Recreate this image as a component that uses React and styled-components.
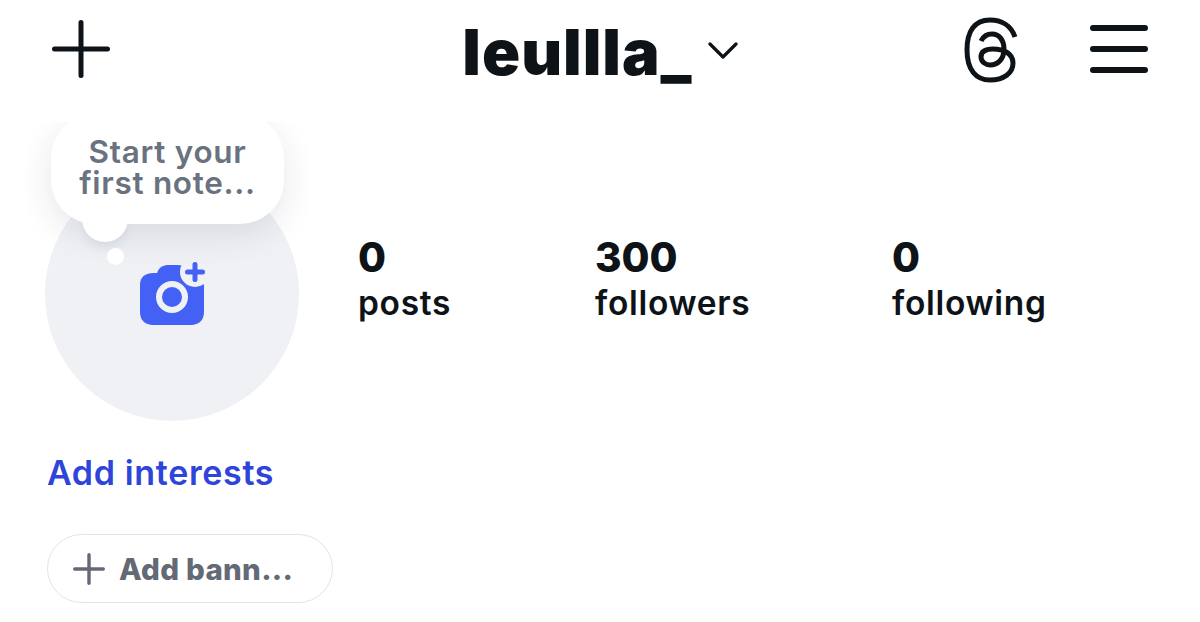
import React from "react";
import styled, { createGlobalStyle } from "styled-components";

const GlobalStyle = createGlobalStyle`
  html, body {
    margin: 0;
    padding: 0;
    background: #fff;
    font-family: "Inter", "Liberation Sans", sans-serif;
    overflow: hidden;
  }
`;

const Page = styled.div`
  width: 1200px;
  height: 622px;
  background: #fff;
  overflow: hidden;
`;

const Header = styled.header`
  height: 98px;
  padding: 0 52px 24px;
  display: grid;
  grid-template-columns: 1fr auto 1fr;
  align-items: center;
`;

const HeaderRight = styled.div`
  display: flex;
  justify-content: flex-end;
  align-items: center;
  gap: 67px;
`;

const Account = styled.div`
  display: flex;
  align-items: center;
  gap: 15px;
`;

const Username = styled.span`
  padding-top: 6px;
  font-size: 63px;
  font-weight: 900;
  letter-spacing: 1px;
  line-height: 1;
  color: #0e1318;
`;

const Icon = styled.svg`
  display: block;
  flex: none;
`;

const ChevronIcon = styled(Icon)`
  margin-top: 3px;
`;

const Profile = styled.section`
  height: 500px;
  padding-left: 45px;
  overflow: hidden;
`;

const Top = styled.div`
  display: flex;
  padding-top: 45px;
`;

const AvatarWrap = styled.div`
  position: relative;
  width: 254px;
  height: 254px;
  flex: none;
`;

const Avatar = styled.div`
  width: 254px;
  height: 254px;
  box-sizing: border-box;
  padding-left: 2px;
  border-radius: 50%;
  background: #eff1f5;
  display: flex;
  align-items: center;
  justify-content: center;
`;

const Bubble = styled.div`
  position: absolute;
  left: 6px;
  top: -53px;
  width: 233px;
  height: 110px;
  box-sizing: border-box;
  padding-top: 22px;
  border-radius: 44px;
  background: #fff;
  box-shadow: 0 10px 34px rgba(30, 40, 60, 0.11);
  text-align: center;
  font-size: 31.5px;
  font-weight: 600;
  line-height: 31px;
  letter-spacing: 0.7px;
  color: #6a7280;
`;

const BubbleTail = styled.div`
  position: absolute;
  left: 31px;
  top: 98px;
  width: 46px;
  height: 30px;
  border-radius: 0 0 23px 23px;
  background: #fff;
  box-shadow: 0 8px 12px -4px rgba(30, 40, 60, 0.1);
`;

const BubbleDot = styled.div`
  position: absolute;
  left: 62px;
  top: 81px;
  width: 17px;
  height: 17px;
  border-radius: 50%;
  background: #fff;
`;

const Stats = styled.div`
  display: grid;
  grid-template-columns: 237px 297px auto;
  margin-left: 59px;
  padding-top: 67px;
`;

const Stat = styled.div`
  display: flex;
  flex-direction: column;
`;

const StatValue = styled.span`
  font-size: 40.5px;
  font-weight: 800;
  line-height: 47px;
  color: #0e1318;
`;

const StatLabel = styled.span`
  font-size: 33.5px;
  font-weight: 600;
  letter-spacing: 0.7px;
  line-height: 44px;
  color: #0e1318;
`;

const InterestsLink = styled.a`
  display: block;
  margin: 30px 0 0 2px;
  font-size: 34px;
  font-weight: 600;
  letter-spacing: 0.65px;
  line-height: 44px;
  color: #2f44d8;
`;

const BannerButton = styled.button`
  display: flex;
  align-items: center;
  gap: 14px;
  width: 286px;
  height: 69px;
  margin: 39px 0 0 2px;
  padding: 0 0 0 25px;
  box-sizing: border-box;
  background: #fff;
  border: 1.5px solid #e2e4ea;
  border-radius: 35px;
  font-family: inherit;
  font-size: 29.5px;
  font-weight: 800;
  letter-spacing: 0.3px;
  color: #636975;
`;

const stats = [
  { value: "0", label: "posts" },
  { value: "300", label: "followers" },
  { value: "0", label: "following" },
];

function Plus({ size, weight, color }) {
  return (
    <Icon width={size} height={size} viewBox={`0 0 ${size} ${size}`}>
      <path
        d={`M${size / 2} ${weight / 2}V${size - weight / 2}M${weight / 2} ${size / 2}H${size - weight / 2}`}
        stroke={color}
        strokeWidth={weight}
        strokeLinecap="round"
        fill="none"
      />
    </Icon>
  );
}

function ThreadsLogo() {
  return (
    <Icon width="64" height="72" viewBox="0 0 64 72">
      <path
        d="M56 24C52 12 42 7 31 7C15 7 8 19 8 37C8 57 17 67 31 67C45 67 54 60 54 50C54 40 44 36 34 36C26 36 22 39 22 44C22 49 27 52 31 52C39 52 45 46 45 36C45 27 40 21 33 21C28 21 24 24 22 28"
        stroke="#0e1318"
        strokeWidth="5"
        fill="none"
        strokeLinecap="butt"
      />
    </Icon>
  );
}

function MenuIcon() {
  return (
    <Icon width="58" height="50" viewBox="0 0 58 50">
      <path
        d="M3 4H55M3 25H55M3 46H55"
        stroke="#0e1318"
        strokeWidth="6"
        strokeLinecap="round"
      />
    </Icon>
  );
}

function Chevron() {
  return (
    <ChevronIcon width="30" height="18" viewBox="0 0 30 18">
      <path
        d="M2 2L15 15L28 2"
        stroke="#0e1318"
        strokeWidth="3.2"
        fill="none"
        strokeLinecap="round"
        strokeLinejoin="round"
      />
    </ChevronIcon>
  );
}

function CameraPlus() {
  return (
    <Icon width="66" height="64" viewBox="0 0 66 64">
      <path
        d="M0 23C0 15 5 11 14 11H17C19 5 23 3 29 3H38C44 3 47 6 50 11H55C61 11 64 17 64 24V50C64 58 59 63 51 63H13C5 63 0 58 0 50Z"
        fill="#4361f5"
      />
      <circle cx="55" cy="10" r="15" fill="#eff1f5" />
      <path
        d="M55 2.5V17.5M47.5 10H62.5"
        stroke="#4361f5"
        strokeWidth="5"
        strokeLinecap="round"
      />
      <circle cx="32" cy="35" r="13" fill="none" stroke="#eff1f5" strokeWidth="6" />
    </Icon>
  );
}

export default function App() {
  return (
    <Page>
      <GlobalStyle />
      <Header>
        <Plus size={58} weight={5} color="#0e1318" />
        <Account>
          <Username>leullla_</Username>
          <Chevron />
        </Account>
        <HeaderRight>
          <ThreadsLogo />
          <MenuIcon />
        </HeaderRight>
      </Header>
      <Profile>
        <Top>
          <AvatarWrap>
            <Avatar>
              <CameraPlus />
            </Avatar>
            <Bubble>
              Start your
              <br />
              first note...
              <BubbleTail />
            </Bubble>
            <BubbleDot />
          </AvatarWrap>
          <Stats>
            {stats.map((s) => (
              <Stat key={s.label}>
                <StatValue>{s.value}</StatValue>
                <StatLabel>{s.label}</StatLabel>
              </Stat>
            ))}
          </Stats>
        </Top>
        <InterestsLink>Add interests</InterestsLink>
        <BannerButton>
          <Plus size={32} weight={3.4} color="#636975" />
          Add bann...
        </BannerButton>
      </Profile>
    </Page>
  );
}
